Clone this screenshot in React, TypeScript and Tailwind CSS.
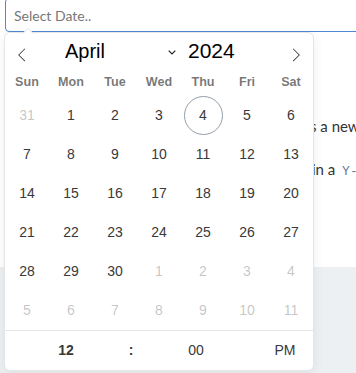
import { ReactNode } from 'react'

type Day = {
  n: number
  muted?: boolean
  today?: boolean
}

const weekdays = ['Sun', 'Mon', 'Tue', 'Wed', 'Thu', 'Fri', 'Sat']

const buildDays = (): Day[] => {
  const days: Day[] = [{ n: 31, muted: true }]
  for (let i = 1; i <= 30; i++) days.push({ n: i, today: i === 4 })
  for (let i = 1; i <= 11; i++) days.push({ n: i, muted: true })
  return days
}

const PrevArrow = () => (
  <svg width="14" height="14" viewBox="0 0 17 17" className="fill-[#393939]">
    <path d="M5.207 8.471l7.146 7.147-0.707 0.707-7.853-7.854 7.854-7.853 0.707 0.707-7.147 7.146z" />
  </svg>
)

const NextArrow = () => (
  <svg width="14" height="14" viewBox="0 0 17 17" className="fill-[#393939]">
    <path d="M13.207 8.472l-7.854 7.854-0.707-0.707 7.146-7.146-7.146-7.148 0.707-0.707 7.854 7.853z" />
  </svg>
)

const TimeCell = ({ className, children }: { className: string; children: ReactNode }) => (
  <div className={`flex items-center justify-center h-full ${className}`}>{children}</div>
)

const Calendar = () => {
  const days = buildDays()

  return (
    <div className="absolute left-[5px] top-[33px] w-[308px] bg-white rounded-[5px] font-['Liberation_Sans',sans-serif] text-[#393939] shadow-[1px_0_0_#e6e6e6,-1px_0_0_#e6e6e6,0_1px_0_#e6e6e6,0_-1px_0_#e6e6e6,0_3px_13px_rgba(0,0,0,0.08)]">
      {/* little arrow pointing at the input */}
      <svg
        width="12"
        height="6"
        viewBox="0 0 12 6"
        className="absolute left-[17px] top-[-5px]"
      >
        <path d="M0 6 L6 0 L12 6 Z" fill="#fff" />
        <path d="M0.5 6 L6 0.5 L11.5 6" fill="none" stroke="#e6e6e6" />
      </svg>

      <div className="flex items-center h-[35px]">
        <div className="w-[34px] flex justify-center mt-[8px]">
          <PrevArrow />
        </div>
        <div className="flex-1 flex items-center text-[20px] leading-none text-black">
          <span className="ml-[26px] w-[103px]">April</span>
          <svg width="8" height="5" viewBox="0 0 8 5" className="mt-[3px]">
            <path d="M0.7 0.7 L4 4 L7.3 0.7" fill="none" stroke="#222" strokeWidth="1.2" />
          </svg>
          <span className="ml-[12px] text-[21px]">2024</span>
        </div>
        <div className="w-[34px] flex justify-center mt-[8px]">
          <NextArrow />
        </div>
      </div>

      <div className="grid grid-cols-7 h-[28px] items-center text-[12.6px] font-bold text-black/55">
        {weekdays.map((w) => (
          <div key={w} className="text-center">
            {w}
          </div>
        ))}
      </div>

      <div className="grid grid-cols-7 text-[14px]">
        {days.map((d, i) => (
          <div key={i} className="flex justify-center">
            <div
              className={`w-[39px] h-[39px] flex items-center justify-center rounded-full ${
                d.today ? 'border border-[#959ea9]' : ''
              } ${d.muted ? 'text-[#393939]/30' : ''}`}
            >
              {d.n}
            </div>
          </div>
        ))}
      </div>

      <div className="flex h-[40px] border-t border-[#e6e6e6] text-[14px]">
        <TimeCell className="w-[122px] font-bold">12</TimeCell>
        <TimeCell className="w-[8px] font-bold">:</TimeCell>
        <TimeCell className="w-[122px]">00</TimeCell>
        <TimeCell className="w-[56px]">PM</TimeCell>
      </div>
    </div>
  )
}

const App = () => {
  return (
    <div className="relative w-[356px] h-[373px] overflow-hidden bg-white font-['Lato',sans-serif]">
      <div className="pl-[5px]">
        <div className="mt-[-2px] h-[34px] w-[420px] border border-[#4f88d5] rounded-[4px] flex items-center pl-[8px] text-[14px] text-[#777]">
          Select Date..
        </div>
      </div>

      <div className="h-[235px] text-[15px] text-[#333] pt-[84px]">
        <p className="whitespace-nowrap pl-[310px] leading-[20px]">s a new</p>
        <p className="whitespace-nowrap pl-[312px] leading-[20px] mt-[23px]">
          in a{' '}
          <code className="ml-[3px] font-['Liberation_Mono',monospace] text-[13px] text-[#6b7a99]">Y-</code>
        </p>
      </div>

      <div className="h-[120px] bg-[#edf0f2]" />

      <Calendar />
    </div>
  )
}

export default App
